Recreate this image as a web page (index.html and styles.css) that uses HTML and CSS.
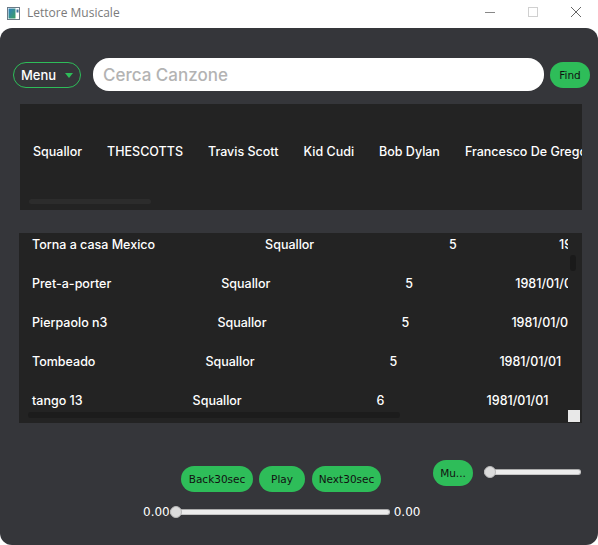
FILE: index.html
```html
<!DOCTYPE html>
<html>
<head>
<meta charset="utf-8">
<link rel="stylesheet" href="styles.css">
</head>
<body>
<div class="window">
  <div class="titlebar">
    <svg class="appicon" width="13" height="13" viewBox="0 0 13 13">
      <rect x="0.5" y="0.5" width="12" height="12" fill="#fff" stroke="#6a7a86"/>
      <defs><linearGradient id="g" x1="0" y1="0" x2="1" y2="1"><stop offset="0" stop-color="#2f7fc0"/><stop offset="1" stop-color="#3aa060"/></linearGradient></defs>
      <rect x="1.5" y="1.5" width="7" height="10" fill="url(#g)"/>
      <rect x="9.5" y="2.5" width="2" height="3" fill="#3a6e9a"/>
    </svg>
    <span class="title">Lettore Musicale</span>
    <div class="winctl">
      <svg width="12" height="12" viewBox="0 0 12 12"><line x1="1" y1="6.5" x2="11" y2="6.5" stroke="#888" stroke-width="1"/></svg>
      <svg width="12" height="12" viewBox="0 0 12 12"><rect x="1.5" y="1.5" width="9" height="9" fill="none" stroke="#d0d0d0"/></svg>
      <svg width="12" height="12" viewBox="0 0 12 12"><path d="M1 1 L11 11 M11 1 L1 11" stroke="#666" stroke-width="1"/></svg>
    </div>
  </div>
  <div class="main">
    <div class="topbar">
      <div class="menu">Menu <span class="tri"></span></div>
      <div class="search">Cerca Canzone</div>
      <div class="btn find">Find</div>
    </div>
    <div class="artists">
      <div class="artist-row">
        <span>Squallor</span><span>THESCOTTS</span><span>Travis Scott</span><span>Kid Cudi</span><span>Bob Dylan</span><span>Francesco De Gregori</span>
      </div>
      <div class="hscroll-a"></div>
    </div>
    <div class="table">
      <div class="rows">
        <div class="row"><span class="c1">Torna a casa Mexico</span><span class="c2">Squallor</span><span class="c3">5</span><span class="c4">1981/01/01</span></div>
        <div class="row"><span class="c1">Pret-a-porter</span><span class="c2">Squallor</span><span class="c3">5</span><span class="c4">1981/01/01</span></div>
        <div class="row"><span class="c1">Pierpaolo n3</span><span class="c2">Squallor</span><span class="c3">5</span><span class="c4">1981/01/01</span></div>
        <div class="row"><span class="c1">Tombeado</span><span class="c2">Squallor</span><span class="c3">5</span><span class="c4">1981/01/01</span></div>
        <div class="row"><span class="c1">tango 13</span><span class="c2">Squallor</span><span class="c3">6</span><span class="c4">1981/01/01</span></div>
      </div>
      <div class="vscroll"></div>
      <div class="hscroll-t"></div>
      <div class="corner"></div>
    </div>
    <div class="bottom">
      <div class="player">
        <div class="buttons">
          <div class="btn">Back30sec</div>
          <div class="btn">Play</div>
          <div class="btn">Next30sec</div>
        </div>
        <div class="progress">
          <span class="lbl">0.00</span>
          <div class="slider prog"><div class="track"></div><div class="thumb"></div></div>
          <span class="lbl">0.00</span>
        </div>
      </div>
      <div class="volume">
        <div class="btn mute">Mu...</div>
        <div class="slider vol"><div class="track"></div><div class="thumb"></div></div>
      </div>
    </div>
  </div>
</div>
</body>
</html>
```
FILE: styles.css
```css
* { box-sizing: border-box; }
html, body { margin: 0; padding: 0; background: #fff; }
.window { width: 598px; height: 545px; display: flex; flex-direction: column; }
.titlebar { height: 28px; display: flex; align-items: center; padding-left: 7px; background: #fff; }
.appicon { margin-top: -2px; }
.title { font-family: "Open Sans", "Noto Sans", sans-serif; font-size: 12px; color: #7a7a7a; margin-left: 7px; margin-top: -3px; }
.winctl { margin-left: auto; display: flex; gap: 31px; margin-right: 16px; margin-top: -4px; }
.main { flex: 1; background: #35363a; border-radius: 12px; display: flex; flex-direction: column; font-family: "Inter", "Noto Sans", sans-serif; }
.topbar { display: flex; align-items: center; margin-top: 30px; padding-left: 13px; height: 33px; }
.menu { width: 68px; height: 26px; border: 1px solid #2ebd59; border-radius: 13px; color: #fff; font-size: 13px; font-weight: 500; display: flex; align-items: center; padding-left: 7px; }
.tri { width: 0; height: 0; border-left: 4.5px solid transparent; border-right: 4.5px solid transparent; border-top: 5px solid #2ebd59; margin-left: 9px; margin-top: 2px; }
.search { width: 451px; height: 33px; margin-left: 12px; background: #fff; border-radius: 16px; color: #b3b3b3; font-size: 17px; font-weight: 500; display: flex; align-items: center; padding-left: 10px; }
.btn { height: 26px; background: #2ebd59; border-radius: 13px; color: #111; font-family: "DejaVu Sans", sans-serif; font-size: 10.5px; display: flex; align-items: center; justify-content: center; }
.find { width: 40px; margin-left: 6px; }
.artists { margin: 13px 16px 0 20px; height: 106px; background: #232323; position: relative; overflow: hidden; }
.artist-row { display: flex; gap: 25px; padding: 40px 0 0 13px; white-space: nowrap; color: #fff; font-size: 12.5px; font-weight: 500; }
.hscroll-a { position: absolute; left: 9px; top: 95px; width: 122px; height: 5px; background: #2c2c2c; border-radius: 3px; }
.table { margin: 23px 16px 0 19px; height: 190px; background: #232323; position: relative; overflow: hidden; }
.rows { margin-top: -8px; width: 549px; overflow: hidden; }
.row { height: 39px; display: flex; align-items: center; white-space: nowrap; color: #fff; font-size: 12.5px; font-weight: 500; padding-left: 13px; }
.c1 { margin-right: 110px; }
.c2 { width: 184px; flex: none; }
.c3 { width: 110px; flex: none; }
.vscroll { position: absolute; left: 551px; top: 22px; width: 6px; height: 16px; background: #1a1a1a; border-radius: 3px; }
.hscroll-t { position: absolute; left: 9px; top: 179px; width: 372px; height: 6px; background: #1c1c1c; border-radius: 3px; }
.corner { position: absolute; left: 549px; top: 177px; width: 12px; height: 12px; background: #e8e8e8; }
.bottom { display: flex; margin-top: 37px; }
.player { margin-left: 143px; width: 279px; display: flex; flex-direction: column; align-items: center; }
.buttons { display: flex; gap: 6px; margin-top: 6px; margin-left: -3px; }
.buttons .btn:nth-child(1) { width: 72px; }
.buttons .btn:nth-child(2) { width: 46px; }
.buttons .btn:nth-child(3) { width: 69px; margin-left: 1px; }
.progress { display: flex; align-items: center; width: 279px; margin-top: 14px; height: 12px; }
.lbl { font-family: "DejaVu Sans", sans-serif; font-size: 12px; color: #fff; }
.slider { position: relative; height: 12px; }
.track { position: absolute; left: 0; right: 0; top: 3px; height: 6px; background: #ececec; border: 1px solid #c4c4c4; border-top-color: #aaa; border-radius: 3px; }
.thumb { position: absolute; left: 0; top: 0; width: 12px; height: 12px; border-radius: 50%; background: #dcdcdc; border: 1px solid #b8b8b8; }
.prog { width: 220px; margin: 0 4px 0 0; }
.volume { display: flex; align-items: center; margin-left: 11px; height: 26px; }
.mute { width: 40px; }
.vol { width: 97px; margin-left: 11px; margin-top: -3px; }
```
